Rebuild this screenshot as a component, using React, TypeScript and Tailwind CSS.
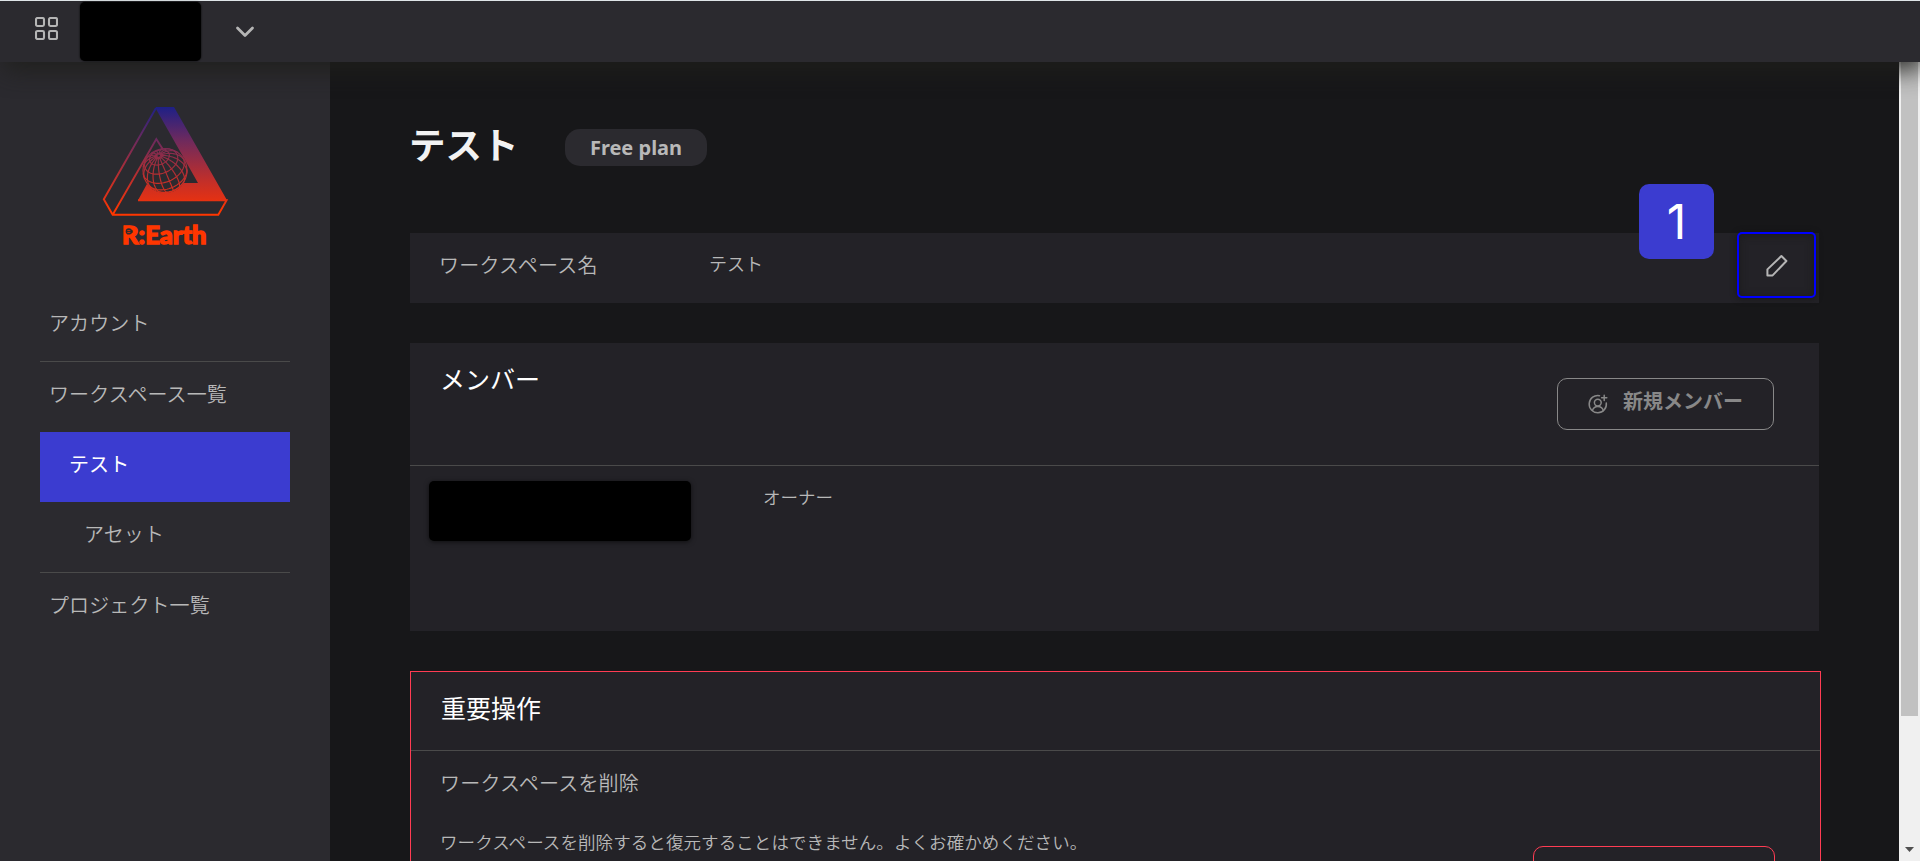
import React from "react";

const CX = 165, CY = 170.5, R = 22;

// Orthographic projection of a graticule whose pole leans towards the viewer.
function project(lat: number, lon: number) {
  const d = Math.PI / 180;
  const x = Math.cos(lat * d) * Math.sin(lon * d);
  const z = Math.cos(lat * d) * Math.cos(lon * d);
  const y = Math.sin(lat * d);
  const t = 43 * d;
  const y2 = y * Math.cos(t) - z * Math.sin(t);
  const z2 = y * Math.sin(t) + z * Math.cos(t);
  const r = -23 * d;
  return {
    x: CX + R * (x * Math.cos(r) + y2 * Math.sin(r)),
    y: CY - R * (-x * Math.sin(r) + y2 * Math.cos(r)),
    visible: z2 >= 0,
  };
}

function trace(points: { x: number; y: number; visible: boolean }[]) {
  let d = "";
  let pen = false;
  for (const p of points) {
    if (!p.visible) {
      pen = false;
      continue;
    }
    d += (pen ? "L" : "M") + p.x.toFixed(2) + " " + p.y.toFixed(2);
    pen = true;
  }
  return d;
}

const graticule: string[] = [];
for (let lon = 0; lon < 360; lon += 22.5) {
  const pts = [];
  for (let lat = 86; lat >= -90; lat -= 3) pts.push(project(lat, lon));
  graticule.push(trace(pts));
}
for (const lat of [80, 62, 38, 12, -14, -36]) {
  const pts = [];
  for (let lon = 0; lon <= 360; lon += 5) pts.push(project(lat, lon));
  graticule.push(trace(pts));
}

function Logo() {
  return (
    <svg width="130" height="144" viewBox="100 105 130 144" className="block">
      <defs>
        <linearGradient id="lg" gradientUnits="userSpaceOnUse" x1="0" y1="107" x2="0" y2="211">
          <stop offset="0" stopColor="#1e2086" />
          <stop offset="0.33" stopColor="#702a5c" />
          <stop offset="0.72" stopColor="#c42f28" />
          <stop offset="0.88" stopColor="#e13115" />
          <stop offset="1" stopColor="#ff3600" />
        </linearGradient>
      </defs>
      <path d="M156 107H174L227 200.3H138L147.5 183H198L156 109Z" fill="url(#lg)" />
      <circle cx={CX} cy={CY} r="22.5" fill="#2b2a2f" />
      <path d="M156 108L103.8 199.3L112.7 214.8H218.3L226.6 200.3H138M112.7 214.8L156.3 139L163 149.5" fill="none" stroke="url(#lg)" strokeWidth="1.9" />
      <g fill="none" stroke="url(#lg)" strokeWidth="1.15">
        <circle cx={CX} cy={CY} r={R} />
        {graticule.map((d, i) => (
          <path key={i} d={d} />
        ))}
      </g>
      <text x="122" y="244" textLength="84.5" lengthAdjust="spacingAndGlyphs" fill="#ff3600" stroke="#ff3600" strokeWidth="1.3" className="font-['Lato'] text-[24.5px] font-black">
        R:Earth
      </text>
      <circle cx="128.8" cy="231.4" r="3.1" fill="#2b2a2f" />
      <path d="M127.3 230.6H130.3M127.3 232.6H130.3" stroke="#ff3600" strokeWidth="0.8" />
    </svg>
  );
}

function GridIcon() {
  return (
    <svg width="23" height="23" viewBox="0 0 23 23" fill="none" stroke="#b5b5b5" strokeWidth="2.1" className="ml-[35px] mt-[16px] shrink-0">
      <rect x="1" y="1" width="8" height="8" rx="1.4" />
      <rect x="14" y="1" width="8" height="8" rx="1.4" />
      <rect x="1" y="14" width="8" height="8" rx="1.4" />
      <rect x="14" y="14" width="8" height="8" rx="1.4" />
    </svg>
  );
}

function NavItem({ label, className = "" }: { label: string; className?: string }) {
  return <div className={"h-[70px] pt-[18px] text-[20px] leading-[30px] tracking-[0.1px] " + className}>{label}</div>;
}

export default function App() {
  return (
    <div className="flex h-[861px] w-[1920px] flex-col overflow-hidden bg-[#171719] font-['Noto_Sans','Noto_Sans_CJK_JP',sans-serif] font-[350] text-[#b8b8b8]">
      <header className="relative z-10 flex h-[62px] shrink-0 border-t border-[#dfe5e8] bg-[#2b2a2f] shadow-[4px_8px_24px_rgba(31,31,28,0.9)]">
        <GridIcon />
        <div className="ml-[22px] mt-[1px] h-[59px] w-[121px] rounded-[5px] bg-black shadow-[0_0_2px_#000]" />
        <svg width="20" height="14" viewBox="0 0 20 14" fill="none" stroke="#b5b5b5" strokeWidth="2.8" strokeLinecap="round" strokeLinejoin="round" className="ml-[34px] mt-[24px]">
          <path d="M2.5 3L10 10.5L17.5 3" />
        </svg>
      </header>

      <div className="flex min-h-0 flex-1">
        <aside className="w-[330px] shrink-0 bg-[#2b2a2f] px-[40px]">
          <div className="flex h-[229px] justify-center pt-[43px]">
            <Logo />
          </div>
          <nav>
            <NavItem label="アカウント" className="pl-[9px]" />
            <div className="h-px bg-[#4a4a4a]" />
            <NavItem label="ワークスペース一覧" className="pl-[9px]" />
            <NavItem label="テスト" className="bg-[#3b3cd0] pl-[29px] font-normal text-white" />
            <NavItem label="アセット" className="pl-[44px]" />
            <div className="h-px bg-[#4a4a4a]" />
            <NavItem label="プロジェクト一覧" className="pl-[9px]" />
          </nav>
        </aside>

        <main className="min-w-0 flex-1 pl-[80px] pt-[67px]">
          <div className="flex h-[104px] items-start">
            <h1 className="-ml-[1px] -mt-[10px] w-[156px] text-[36.5px] font-bold leading-[52px] text-[#f2f2f2]">テスト</h1>
            <div className="h-[37px] w-[142px] rounded-[15px] bg-[#2b2a2f] text-center text-[20px] font-bold leading-[37px]">Free plan</div>
          </div>

          <section className="relative flex h-[70px] w-[1409px] bg-[#232227] pl-[29px]">
            <div className="w-[270px] pt-[18px] text-[20px] leading-[30px] tracking-[0.2px]">ワークスペース名</div>
            <div className="pt-[18px] text-[18px] leading-[27px]">テスト</div>
            <div className="absolute left-[1229px] top-[-49px] h-[75px] w-[75px] rounded-[10px] bg-[#3b3cd0] text-center font-['Inter'] text-[48px] font-normal leading-[75px] text-white">1</div>
            <div className="absolute left-[1327px] top-[-1px] flex h-[66px] w-[79px] items-center justify-center rounded-[5px] border-2 border-[#0000ff] shadow-[0_1px_6px_rgba(20,20,18,0.7),inset_0_1px_8px_rgba(20,20,18,0.5)]">
              <svg width="24" height="24" viewBox="0 0 24 24" fill="none" stroke="#b5b5b5" strokeWidth="2" strokeLinejoin="round" className="mt-[1px]">
                <path d="M2.4 15.4L16.4 2L21.4 7L7.6 21.4H2.4Z" />
              </svg>
            </div>
          </section>

          <section className="mt-[40px] h-[288px] w-[1409px] bg-[#232227]">
            <div className="flex h-[123px] justify-between border-b border-[#4a4a4a] pl-[30px] pr-[45px]">
              <h2 className="pt-[18px] text-[25px] font-normal leading-[36px] text-white">メンバー</h2>
              <button className="mt-[35px] flex h-[52px] w-[217px] rounded-[10px] border border-[#888] text-[#888]">
                <svg width="20" height="20" viewBox="0 0 20 20" fill="none" stroke="#888" strokeWidth="1.5" strokeLinecap="round" className="ml-[30px] mt-[15px]">
                  <path d="M11.5 1.7A8.6 8.6 0 1 0 18.3 9" />
                  <circle cx="9.8" cy="8.6" r="3.4" />
                  <path d="M4.4 16.6C5.2 13.6 7.2 12.4 9.8 12.4S14.6 13.6 15.4 16.6" />
                  <path d="M16.2 1.2V6.4M13.6 3.8H18.8" />
                </svg>
                <span className="ml-[15px] mt-[8px] whitespace-nowrap text-[20px] font-bold leading-[30px]">新規メンバー</span>
              </button>
            </div>
            <div className="flex">
              <div className="ml-[19px] mt-[15px] h-[60px] w-[262px] rounded-[5px] bg-black shadow-[0_1px_5px_rgba(0,0,0,0.6)]" />
              <div className="ml-[72px] mt-[18px] text-[17.5px] leading-[27px]">オーナー</div>
            </div>
          </section>

          <section className="mt-[40px] h-[300px] w-[1411px] border border-[#ff3c53] bg-[#232227]">
            <h2 className="h-[79px] border-b border-[#4a4a4a] pl-[30px] pt-[18px] text-[25px] font-normal leading-[36px] text-white">重要操作</h2>
            <div className="pl-[29px] pt-[18px] text-[20px] leading-[30px] tracking-[0.2px]">ワークスペースを削除</div>
            <div className="flex justify-between pl-[29px] pr-[45px]">
              <p className="pt-[30px] text-[17.5px] leading-[27px] tracking-[0.08px]">ワークスペースを削除すると復元することはできません。よくお確かめください。</p>
              <div className="mt-[47px] h-[52px] w-[242px] rounded-[10px] border border-[#ff3c53]" />
            </div>
          </section>
        </main>

        <div className="flex w-[21px] shrink-0 flex-col items-center bg-[#f0f0f0]">
          <div className="h-[654px] w-[17px] bg-[#c1c1c1]" />
          <svg width="9" height="5" viewBox="0 0 9 5" className="mt-[131px]">
            <path d="M0 0H9L4.5 5Z" fill="#505050" />
          </svg>
        </div>
      </div>
    </div>
  );
}
